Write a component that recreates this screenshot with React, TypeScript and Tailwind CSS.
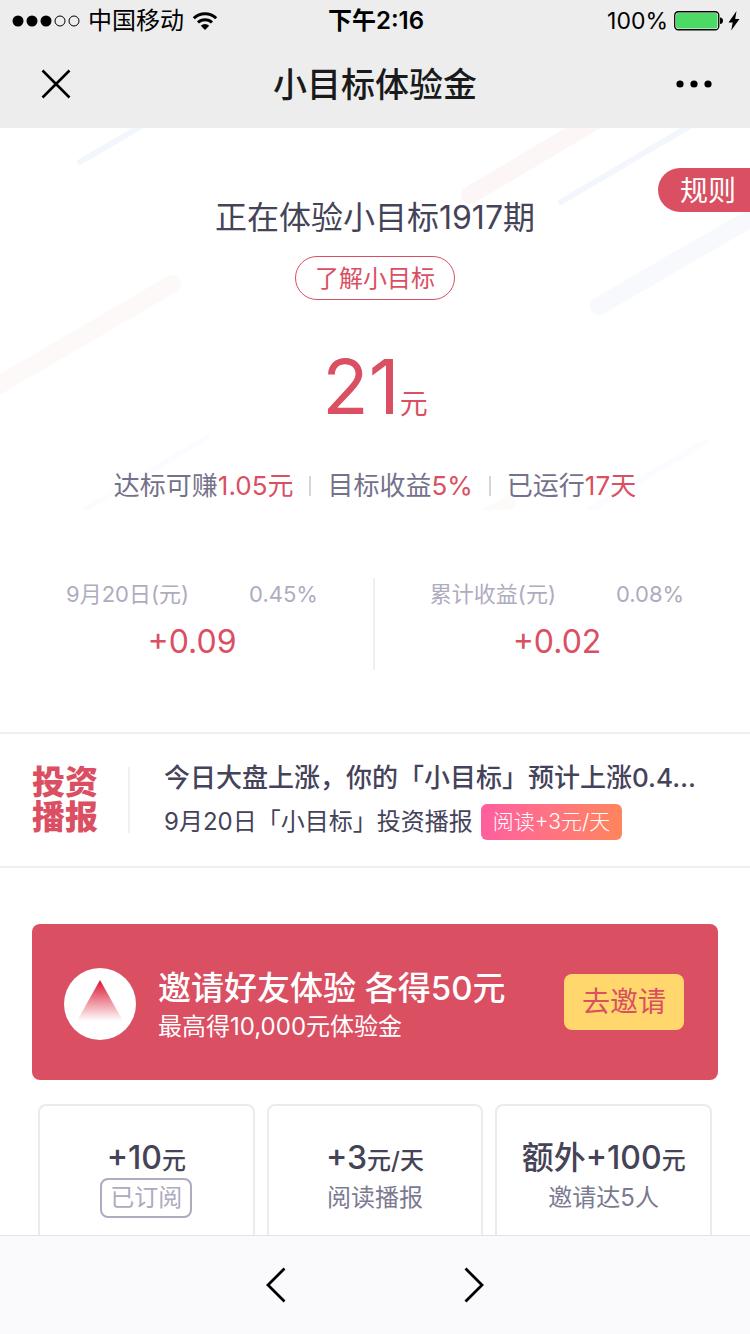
import React from "react";

const stats = [
  { label: "达标可赚", value: "1.05元" },
  { label: "目标收益", value: "5%" },
  { label: "已运行", value: "17天" },
];

const earnings = [
  { label: "9月20日(元)", rate: "0.45%", value: "+0.09" },
  { label: "累计收益(元)", rate: "0.08%", value: "+0.02" },
];

const tasks = [
  { prefix: "", amount: "+10", unit: "元", note: "已订阅", done: true },
  { prefix: "", amount: "+3", unit: "元/天", note: "阅读播报", done: false },
  { prefix: "额外", amount: "+100", unit: "元", note: "邀请达5人", done: false },
];

const StatusBar = () => {
  return (
    <div className="grid h-10 grid-cols-3 items-center pt-0.5 pr-2.5 pl-3 text-2xl text-black">
      <div className="flex items-center">
        <svg width="70" height="14" viewBox="0 0 70 14" className="mr-1.5">
          <circle cx="6" cy="7" r="5.5" />
          <circle cx="20" cy="7" r="5.5" />
          <circle cx="34" cy="7" r="5.5" />
          <circle cx="48" cy="7" r="5" fill="none" stroke="#000" />
          <circle cx="62" cy="7" r="5" fill="none" stroke="#000" />
        </svg>
        <span>中国移动</span>
        <svg width="26" height="20" viewBox="0 0 26 20" className="ml-2">
          <g fill="none" stroke="#000" strokeWidth="3">
            <path d="M1.8 7.2a16 16 0 0 1 22.4 0" />
            <path d="M6 11.5a10 10 0 0 1 14 0" />
          </g>
          <path d="M13 19l-4.2-4.3a6 6 0 0 1 8.4 0z" />
        </svg>
      </div>
      <p className="text-center font-semibold">下午2:16</p>
      <div className="flex items-center justify-end">
        <span className="text-[23px]">100%</span>
        <svg width="50" height="20" viewBox="0 0 50 20" className="ml-1.5">
          <rect x="0.75" y="0.75" width="44" height="18" rx="3.5" fill="#fff" stroke="#000" strokeWidth="1.3" />
          <rect x="2" y="2" width="41.5" height="15.5" rx="2" fill="#4cd964" />
          <path d="M46 6.5c4 0 4 6.5 0 6.5z" />
        </svg>
        <svg width="12" height="20" viewBox="0 0 12 20" className="ml-1">
          <path d="M8.5 0L0.5 11.5h4.2L3.2 19.5 11.5 8H7.2z" />
        </svg>
      </div>
    </div>
  );
};

const NavBar = () => {
  return (
    <div className="flex h-[88px] items-center justify-between px-9">
      <button aria-label="关闭" className="flex w-10 justify-center">
        <svg width="30" height="30" viewBox="0 0 30 30" stroke="#000" strokeWidth="2.6">
          <path d="M1.5 1.5l27 27M28.5 1.5l-27 27" />
        </svg>
      </button>
      <h1 className="text-[34px] font-medium text-[#1a1a1a]">小目标体验金</h1>
      <button aria-label="更多" className="flex w-10 justify-center">
        <svg width="38" height="10" viewBox="0 0 38 10">
          <circle cx="5" cy="5" r="3.6" />
          <circle cx="19" cy="5" r="3.6" />
          <circle cx="33" cy="5" r="3.6" />
        </svg>
      </button>
    </div>
  );
};

// faint diagonal streaks behind the hero
const Streaks = () => {
  return (
    <svg
      viewBox="0 0 750 382"
      className="absolute inset-x-0 top-0 -z-10 w-full"
      fill="none"
      strokeLinecap="round"
      aria-hidden="true"
    >
      <path d="M80 34L160 -13" stroke="#f3f7fd" strokeWidth="6" />
      <path d="M470 67L610 -16" stroke="#fdf6f6" strokeWidth="18" />
      <path d="M561 74L710 -14" stroke="#f3f7fd" strokeWidth="6" />
      <path d="M599 178L770 79" stroke="#f8f9fd" strokeWidth="18" />
      <path d="M172 156L-20 268" stroke="#fdf9f9" strokeWidth="18" />
      <path d="M208 309L86 381" stroke="#fafcff" strokeWidth="5" />
      <path d="M705 314L586 384" stroke="#fafcff" strokeWidth="6" />
      <path d="M508 375L480 391" stroke="#fefafa" strokeWidth="14" />
    </svg>
  );
};

const Hero = () => {
  return (
    <section className="relative isolate pt-17 pb-[62px] text-center">
      <Streaks />
      <button className="absolute top-10 right-0 h-11 rounded-l-full bg-[#da4f62] pr-3.5 pl-[22px] text-[28px] leading-[46px] text-white">
        规则
      </button>
      <h2 className="text-[32px] leading-[44px] text-[#454357]">
        正在体验小目标1917期
      </h2>
      <a
        href="#about"
        className="mx-auto mt-4 block h-11 w-40 rounded-full border border-[#da4f62] text-2xl leading-[44px] text-[#da4f62]"
      >
        了解小目标
      </a>
      <p className="mt-[38px] text-[76px] leading-[96px] text-[#da4f62]">
        21<span className="text-[28px] leading-none">元</span>
      </p>
      <ul className="mt-8 flex items-center justify-center text-[26px] leading-[40px] text-[#74728a]">
        {stats.map((stat, i) => (
          <li key={stat.label} className="flex items-center">
            {i > 0 && <span className="mx-4 h-5 w-0.5 bg-[#d5d4dc]" />}
            {stat.label}
            <span className="text-[#da4f62]">{stat.value}</span>
          </li>
        ))}
      </ul>
      <div className="mt-[72px] grid grid-cols-2 divide-x-2 divide-[#efeff1] px-[11px]">
        {earnings.map((item) => (
          <div key={item.label} className="h-[92px]">
            <div className="flex justify-center gap-15 text-[22px] leading-8 text-[#aeacbf]">
              <span>{item.label}</span>
              <span>{item.rate}</span>
            </div>
            <p className="mt-2 text-[32px] leading-[48px] text-[#da4f62]">
              {item.value}
            </p>
          </div>
        ))}
      </div>
    </section>
  );
};

const Report = () => {
  return (
    <section className="flex items-center border-y-2 border-[#f0f0f0] px-8 py-6 text-[#45435a]">
      <p className="w-[68px] text-[33px] leading-[35px] font-black text-[#da4f62]">
        投资播报
      </p>
      <span className="ml-7 h-[66px] w-0.5 shrink-0 bg-[#f0f0f0]" />
      <div className="ml-[34px] min-w-0 flex-1">
        <h3 className="text-[26px] leading-[40px] font-medium">
          今日大盘上涨，你的「小目标」预计上涨0.4…
        </h3>
        <div className="mt-1 flex items-center gap-2 text-2xl leading-[40px]">
          <span>9月20日「小目标」投资播报</span>
          <a
            href="#report"
            className="h-9 rounded-md bg-linear-to-r from-[#ff5e9f] to-[#ff855b] px-3 text-[21px] leading-9 font-light text-white"
          >
            阅读+3元/天
          </a>
        </div>
      </div>
    </section>
  );
};

const InviteBanner = () => {
  return (
    <section className="mx-8 mt-14 flex h-[156px] items-center rounded-lg bg-[#da4f62] pr-[34px] pl-8 text-white">
      <svg width="72" height="72" viewBox="0 0 72 72" className="mt-1 shrink-0">
        <defs>
          <linearGradient id="peak" x1="0" y1="0" x2="0" y2="1">
            <stop offset="0" stopColor="#d9142e" />
            <stop offset="1" stopColor="#fff" />
          </linearGradient>
        </defs>
        <circle cx="36" cy="36" r="36" fill="#fff" />
        <path d="M36 12l23 41H13z" fill="url(#peak)" />
      </svg>
      <div className="ml-[22px] flex-1 pt-2">
        <h3 className="text-[33px] leading-[42px] font-medium">
          邀请好友体验 各得50元
        </h3>
        <p className="text-2xl leading-9">最高得10,000元体验金</p>
      </div>
      <button className="h-14 w-[120px] rounded-lg bg-[#ffd76c] text-[28px] text-[#da4f62]">
        去邀请
      </button>
    </section>
  );
};

const Tasks = () => {
  return (
    <ul className="mx-[38px] mt-6 grid grid-cols-3 gap-3">
      {tasks.map((task) => (
        <li
          key={task.note}
          className="h-60 rounded-lg border-2 border-[#ebebeb] pt-8 text-center whitespace-nowrap"
        >
          <p className="text-[32px] leading-[40px] font-medium text-[#454357]">
            {task.prefix}
            {task.amount}
            <span className="text-2xl leading-none">{task.unit}</span>
          </p>
          {task.done ? (
            <span className="inline-block rounded-lg border-2 border-[#aeaac0] px-2 text-2xl leading-9 text-[#aeaac0]">
              {task.note}
            </span>
          ) : (
            <p className="text-2xl leading-[40px] text-[#7c7a90]">{task.note}</p>
          )}
        </li>
      ))}
    </ul>
  );
};

const BottomBar = () => {
  return (
    <nav className="flex h-[99px] shrink-0 items-center justify-center gap-[178px] border-t border-[#e2e2e4] bg-[#fafafc]">
      <button aria-label="后退">
        <svg width="20" height="36" viewBox="0 0 20 36" fill="none" stroke="#000" strokeWidth="2.8">
          <path d="M18.5 1.5L2 18l16.5 16.5" />
        </svg>
      </button>
      <button aria-label="前进">
        <svg width="20" height="36" viewBox="0 0 20 36" fill="none" stroke="#000" strokeWidth="2.8">
          <path d="M1.5 1.5L18 18 1.5 34.5" />
        </svg>
      </button>
    </nav>
  );
};

const App = () => {
  return (
    <div className="flex h-screen flex-col bg-white font-['Inter','Noto_Sans_CJK_SC',sans-serif]">
      <header className="shrink-0 bg-[#ededed]">
        <StatusBar />
        <NavBar />
      </header>
      <main className="min-h-0 flex-1 overflow-y-auto [scrollbar-width:none]">
        <Hero />
        <Report />
        <InviteBanner />
        <Tasks />
      </main>
      <BottomBar />
    </div>
  );
};

export default App;
